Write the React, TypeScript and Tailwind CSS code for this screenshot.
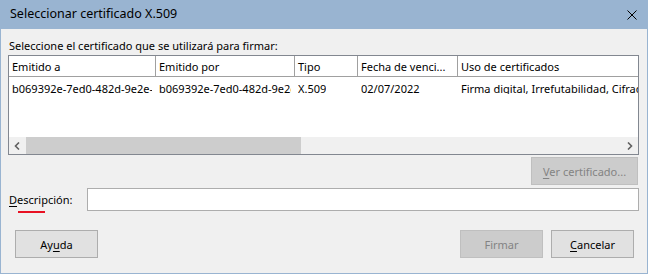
import React from "react";

const F = { fontFamily: '"Noto Sans", "Liberation Sans", sans-serif' };

function U({ children }: { children: React.ReactNode }) {
  return <span className="underline underline-offset-2">{children}</span>;
}

export default function App() {
  return (
    <div
      className="w-[648px] h-[274px] bg-[#99b4d1] flex flex-col px-px pb-px text-[11px] text-black leading-none overflow-hidden"
      style={F}
    >
      {/* title bar */}
      <div className="h-[29px] flex items-center justify-between pl-[9px] pr-[10px] shrink-0">
        <span className="text-[12.5px] text-black">Seleccionar certificado X.509</span>
        <svg width="10" height="10" viewBox="0 0 10 10">
          <path d="M0.5 0.5 L9.5 9.5 M9.5 0.5 L0.5 9.5" stroke="#000" strokeWidth="1" />
        </svg>
      </div>
      {/* body */}
      <div className="flex-1 bg-[#f0f0f0] flex flex-col px-[7px]">
        <div className="h-[16px] mt-[8px] ml-px flex items-center">Seleccione el certificado que se utilizará para firmar:</div>
        {/* table */}
        <div className="mt-[2px] w-[631px] h-[100px] border border-[#828790] bg-white flex flex-col">
          <div className="h-[21px] flex border-b border-[#a0a0a0] shrink-0">
            <div className="w-[147px] shrink-0 border-r border-[#a0a0a0] pl-[3px] flex items-center">Emitido a</div>
            <div className="w-[139px] shrink-0 border-r border-[#a0a0a0] pl-[3px] flex items-center">Emitido por</div>
            <div className="w-[63px] shrink-0 border-r border-[#a0a0a0] pl-[3px] flex items-center">Tipo</div>
            <div className="w-[100px] shrink-0 border-r border-[#a0a0a0] pl-[3px] flex items-center">Fecha de venci...</div>
            <div className="flex-1 min-w-0 pl-[3px] flex items-center">Uso de certificados</div>
          </div>
          <div className="h-[22px] flex shrink-0 whitespace-nowrap">
            <div className="w-[147px] shrink-0 pl-[3px] pr-[4px] flex items-center">
              <div className="overflow-hidden">b069392e-7ed0-482d-9e2e-4f1a</div>
            </div>
            <div className="w-[139px] shrink-0 pl-[3px] pr-[4px] flex items-center">
              <div className="overflow-hidden">b069392e-7ed0-482d-9e2e-4f1a</div>
            </div>
            <div className="w-[63px] shrink-0 pl-[3px] pr-[2px] flex items-center">
              <div className="overflow-hidden">X.509</div>
            </div>
            <div className="w-[100px] shrink-0 pl-[3px] pr-[2px] flex items-center">
              <div className="overflow-hidden">02/07/2022</div>
            </div>
            <div className="flex-1 min-w-0 pl-[3px] flex items-center">
              <div className="overflow-hidden">Firma digital, Irrefutabilidad, Cifrado de claves</div>
            </div>
          </div>
          <div className="flex-1" />
          {/* scrollbar */}
          <div className="h-[17px] flex bg-[#f0f0f0] shrink-0">
            <div className="w-[17px] flex items-center justify-center">
              <svg width="7" height="8" viewBox="0 0 7 8">
                <path d="M5 0.5 L1.5 4 L5 7.5" stroke="#606060" strokeWidth="1.6" fill="none" />
              </svg>
            </div>
            <div className="w-[275px] bg-[#cdcdcd]" />
            <div className="flex-1" />
            <div className="w-[17px] flex items-center justify-center">
              <svg width="7" height="8" viewBox="0 0 7 8">
                <path d="M2 0.5 L5.5 4 L2 7.5" stroke="#606060" strokeWidth="1.6" fill="none" />
              </svg>
            </div>
          </div>
        </div>
        {/* ver certificado */}
        <div className="flex justify-end mt-[2px] pr-[2px]">
          <div className="w-[107px] h-[28px] bg-[#cccccc] border border-[#bfbfbf] text-[#838383] flex items-center justify-center">
            <span><U>V</U>er certificado...</span>
          </div>
        </div>
        {/* descripcion */}
        <div className="flex items-center mt-[3px] h-[23px]">
          <div className="w-[79px] pl-[1px] relative">
            <U>D</U>escripción:
            <div className="absolute left-[10px] top-[17px] w-[27px] h-[2px] bg-[#e81123]" />
          </div>
          <div className="w-[552px] h-[23px] bg-white border border-[#adadad]" />
        </div>
        {/* buttons */}
        <div className="flex mt-[19px] pl-[7px] pr-[6px]">
          <div className="w-[83px] h-[28px] bg-[#e1e1e1] border border-[#adadad] flex items-center justify-center">
            <span>Ay<U>u</U>da</span>
          </div>
          <div className="flex-1" />
          <div className="w-[83px] h-[28px] bg-[#cccccc] border border-[#bfbfbf] text-[#838383] flex items-center justify-center">
            Firmar
          </div>
          <div className="w-[83px] h-[28px] ml-[8px] bg-[#e1e1e1] border border-[#adadad] flex items-center justify-center">
            <span><U>C</U>ancelar</span>
          </div>
        </div>
      </div>
    </div>
  );
}
